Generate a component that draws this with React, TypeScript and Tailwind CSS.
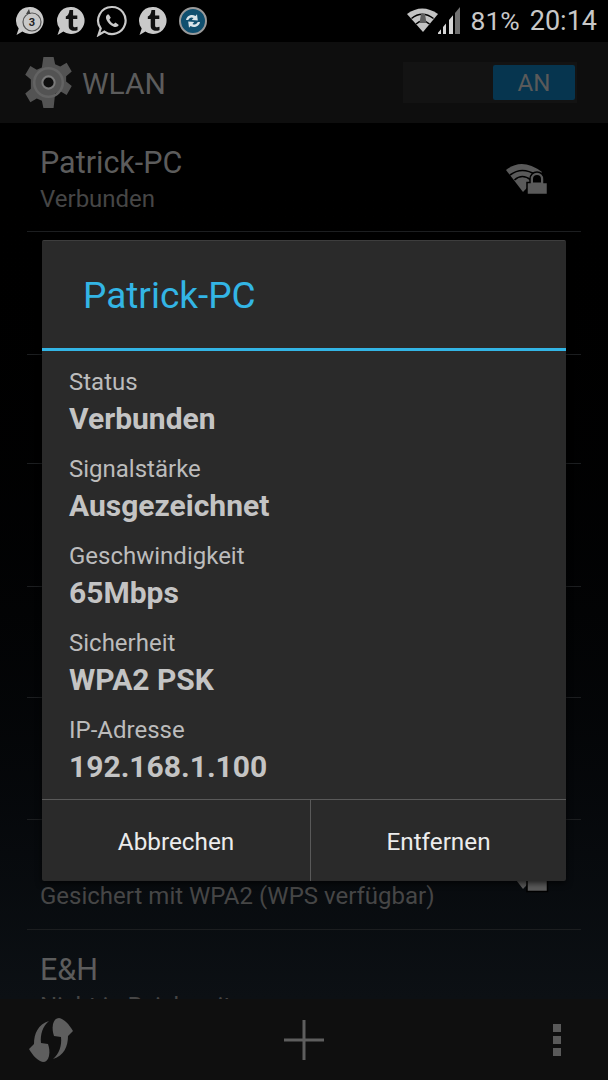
function Bubble({ children, outline }: { children?: React.ReactNode; outline?: boolean }) {
  return (
    <svg width="32" height="32" viewBox="0 0 32 32">
      <path
        d="M16 2a13.5 13.5 0 1 1-7.6 24.6L2.5 30l2.200-6.600A13.500 13.500 0 0 1 16 2z"
        fill={outline ? "none" : "#c9c9c9"}
        stroke={outline ? "#c9c9c9" : "none"}
        strokeWidth={outline ? 2.2 : 0}
      />
      {children}
    </svg>
  );
}

function TumblrT() {
  return (
    <path
      d="M14.500 5h3.600v5.400h4.200v3.600h-4.200v6.400c0 2 1.800 2.200 4.400 1.400v3.400c-4.600 1.400-8.800.2-8.800-4.200V14h-2.900v-2.400c1.900-.8 3.300-2.800 3.700-6.600z"
      fill="#111"
    />
  );
}

function WifiLock() {
  return (
    <svg width="60" height="45" viewBox="0 0 60 45" className="shrink-0">
      <path d="M11 15Q27 2 47 17L28 37z" fill="#5a5a5a" />
      <path d="M15 20Q27 11 41 20M19.500 25Q27 18 36 25" fill="none" stroke="#000" strokeWidth="1.600" />
      <path d="M32 39.500V27.500h3v-3.500a7 7 0 0 1 14 0v3.500h3.500v12z" fill="#5a5a5a" stroke="#000" strokeWidth="1.500" />
      <path d="M38 27.500h8v-3.500a4 4 0 0 0-8 0z" fill="#000" />
    </svg>
  );
}

function ListRow({ h, title, sub, icon }: { h: string; title?: string; sub?: string; icon?: boolean }) {
  return (
    <div className={`${h} shrink-0 mx-[27px] border-b border-[#1c1e20] flex items-center justify-between pl-[13px] pr-[26px]`}>
      <div className="flex flex-col pt-[5px]">
        {title && <span className="text-[30.5px] leading-[38px] text-[#5c5c5c]">{title}</span>}
        {sub && <span className="text-[24px] leading-[34px] text-[#464646]">{sub}</span>}
      </div>
      {icon && <WifiLock />}
    </div>
  );
}

function InfoItem({ label, value }: { label: string; value: string }) {
  return (
    <div className="h-[87px] flex flex-col">
      <span className="text-[24px] leading-[40px] text-[#bcbcbc]">{label}</span>
      <span className="text-[30px] leading-[34px] font-bold text-[#c4c4c4]">{value}</span>
    </div>
  );
}

export default function App() {
  return (
    <div className="relative w-[608px] h-[1080px] overflow-hidden bg-black flex flex-col font-['Roboto',sans-serif]">
      {/* status bar */}
      <div className="h-[42px] shrink-0 bg-black flex items-center justify-between pl-[14px] pr-[11px]">
        <div className="flex items-center gap-[9px]">
          <Bubble>
            <circle cx="18" cy="17" r="9" fill="none" stroke="#555" strokeWidth="1.2" />
            <path d="M12 9l3-5 1.500 5z" fill="#444" />
            <text x="18" y="21" fontSize="11" fontWeight="700" textAnchor="middle" fill="#222">3</text>
          </Bubble>
          <Bubble><TumblrT /></Bubble>
          <Bubble outline>
            <path
              d="M11.500 9.500c-1.600 1-2 3-1 5.200 1.500 3.300 4 5.800 7.300 7 2.200.8 4.200 0 5-1.700l-3.300-2.400-1.800 1.400c-2-1-3.400-2.500-4.300-4.500l1.400-1.700-2-3.300z"
              fill="#c9c9c9"
            />
          </Bubble>
          <Bubble><TumblrT /></Bubble>
          <svg width="30" height="30" viewBox="0 0 30 30">
            <circle cx="15" cy="15" r="13" fill="#0f4f6f" stroke="#9a9a9a" strokeWidth="2" />
            <path d="M8 14c.8-4.500 6-6.500 9.500-4l1.500-1.800.8 6.300-6-.6 1.700-1.900c-2-1.300-4.300-.5-5.200 1.900z" fill="#d8e4ea" />
            <path d="M22 16c-.8 4.500-6 6.500-9.500 4L11 21.800l-.8-6.300 6 .6-1.700 1.900c2 1.300 4.300.5 5.200-1.900z" fill="#d8e4ea" />
          </svg>
        </div>
        <div className="flex items-center">
          <svg width="70" height="38" viewBox="0 0 70 38">
            <path d="M7 12Q22 1 38 12L23 30z" fill="#c4c4c4" />
            <path d="M11.500 16.500Q22 8 33.500 16.500M16 22Q22.500 16 29.500 22" fill="none" stroke="#000" strokeWidth="1.500" />
            <path d="M21 12h4l1.500 9h-7z" fill="#5e5e5e" />
            <path d="M38 32v-1.200L41 27.300V32zM43 32v-7L46 21.400V32zM49 32V17.900l4-4.700V32z" fill="#d6d6d6" />
            <path d="M55 32V10.900L60 5v27z" fill="#707070" />
          </svg>
          <span className="ml-[1px] text-[26.500px] leading-none text-[#c8c8c8]">81%</span>
          <span className="ml-[10px] text-[27px] leading-none text-[#c8c8c8]">20:14</span>
        </div>
      </div>

      {/* action bar */}
      <div className="h-[81px] shrink-0 bg-[#0e0e0e] flex items-center justify-between pl-[24px] pr-[31px]">
        <div className="flex items-center gap-[9px]">
          <svg width="49" height="51" viewBox="0 0 48 50">
            <path
              d="M19 0h10l1.500 7 5 2.200 6.300-3.600 5 8.700-5.500 4.500v5.200l5.500 4.500-5 8.700-6.300-3.600-5 2.200L29 50H19l-1.500-7-5-2.200-6.300 3.600-5-8.700 5.500-4.500v-9.200L1.200 17.500l5-8.700 6.300 3.600 5-2.200z"
              fill="#535353"
            />
            <circle cx="24" cy="25" r="14" fill="none" stroke="#636363" strokeWidth="2.500" />
            <circle cx="24" cy="25" r="6" fill="#0e0e0e" stroke="#7a7a7a" strokeWidth="2" />
          </svg>
          <span className="text-[30px] leading-none pt-[3px] text-[#5c5c5c]">WLAN</span>
        </div>
        <div className="w-[174px] h-[41px] bg-[#131313] flex justify-end items-center pr-[2px]">
          <div className="w-[82px] h-[35px] rounded-[2px] bg-[#06354f] flex items-center justify-center text-[24px] text-[#5a5a5a]">
            AN
          </div>
        </div>
      </div>

      {/* network list */}
      <div className="flex-1 min-h-0 overflow-hidden flex flex-col bg-gradient-to-b from-black to-[#0c1014]">
        <ListRow h="h-[109px]" title="Patrick-PC" sub="Verbunden" icon />
        <ListRow h="h-[123px]" />
        <ListRow h="h-[109px]" />
        <ListRow h="h-[123px]" />
        <ListRow h="h-[111px]" />
        <ListRow h="h-[122px]" />
        <ListRow h="h-[110px]" title={"\u00a0"} sub="Gesichert mit WPA2 (WPS verfügbar)" icon />
        <div className="shrink-0 pl-[40px] pt-[21px]">
          <div className="text-[30.500px] leading-[38px] text-[#5c5c5c]">E&amp;H</div>
          <div className="text-[24px] leading-[34px] text-[#464646]">Nicht in Reichweite</div>
        </div>
      </div>

      {/* bottom bar */}
      <div className="h-[81px] shrink-0 bg-[#0f0f0f] grid grid-cols-3 items-center">
        <svg width="60" height="60" viewBox="0 0 60 60" fill="#5e5e5e" className="ml-[20px]">
          <path d="M29 11C18 14 14 24 14 34L9 39C13 46 18 51 23 52C26 52 28 50 29 46C30 41 29 37 28 34L21 33C20 24 23 16 29 11z" />
          <path d="M33 49C44 46 48 36 48 26L53 21C49 14 44 9 39 8C36 8 34 10 33 14C32 19 33 23 34 26L41 27C42 36 39 44 33 49z" />
        </svg>
        <svg width="40" height="40" viewBox="0 0 40 40" fill="#5e5e5e" className="justify-self-center">
          <rect x="18.500" y="0" width="3" height="40" />
          <rect x="0" y="18.500" width="40" height="3" />
        </svg>
        <div className="flex flex-col gap-[4px] justify-self-end mr-[47px]">
          <div className="w-[8px] h-[8px] bg-[#5a5a5a]" />
          <div className="w-[8px] h-[8px] bg-[#5a5a5a]" />
          <div className="w-[8px] h-[8px] bg-[#5a5a5a]" />
        </div>
      </div>

      {/* dialog */}
      <div className="absolute left-[42px] top-[240px] w-[524px] h-[641px] rounded-[2px] bg-[#2a2a2a] border-t border-[#3d3d3d] flex flex-col shadow-[0_2px_6px_rgba(0,0,0,0.7)]">
        <div className="h-[107px] shrink-0 flex items-center pl-[41px] pt-[2px] text-[37px] text-[#33b5e5]">Patrick-PC</div>
        <div className="h-[3px] shrink-0 bg-[#33b5e5]" />
        <div className="flex-1 min-h-0 flex flex-col pl-[27px] pt-[11px]">
          <InfoItem label="Status" value="Verbunden" />
          <InfoItem label="Signalstärke" value="Ausgezeichnet" />
          <InfoItem label="Geschwindigkeit" value="65Mbps" />
          <InfoItem label="Sicherheit" value="WPA2 PSK" />
          <InfoItem label="IP-Adresse" value="192.168.1.100" />
        </div>
        <div className="h-[82px] shrink-0 border-t border-[#595959] flex text-[24.300px] text-[#ececec]">
          <div className="w-[269px] border-r border-[#595959] flex items-center justify-center pt-[4px]">Abbrechen</div>
          <div className="flex-1 flex items-center justify-center pt-[4px]">Entfernen</div>
        </div>
      </div>
    </div>
  );
}
